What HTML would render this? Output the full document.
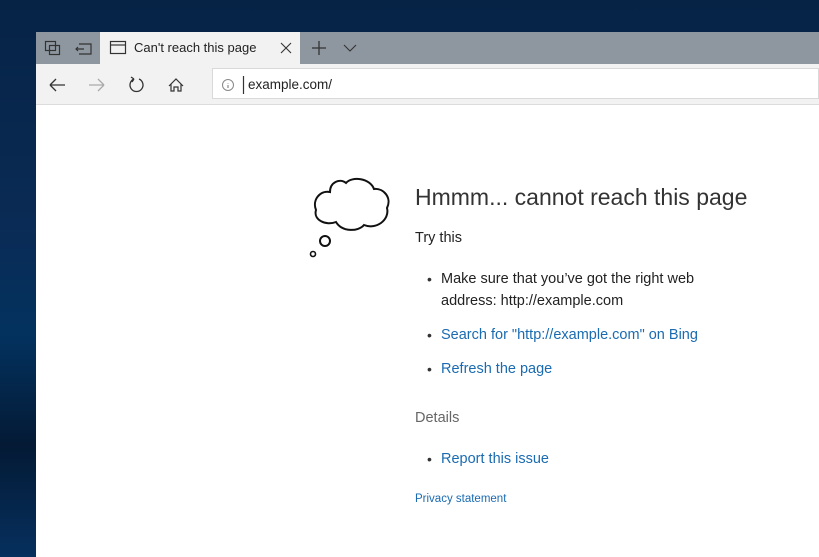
<!DOCTYPE html>
<html><head><meta charset="utf-8"><style>
body{margin:0;width:819px;height:557px;overflow:hidden;position:relative;font-family:"Liberation Sans",sans-serif;
background:linear-gradient(180deg,#062346 0%,#0a2b55 40%,#03325f 60%,#041a35 80%,#06305e 100%);}
.a{position:absolute;white-space:nowrap}
.tabbar{left:36px;top:32px;width:783px;height:32px;background:#8e979f}
.tab{left:100px;top:32px;width:200px;height:32px;background:#f2f2f2}
.tool{left:36px;top:64px;width:783px;height:40px;background:#f2f2f2;border-bottom:1px solid #dcdcdc}
.addr{left:212px;top:68px;width:607px;height:31px;background:#fff;border:1px solid #d9d9d9;box-sizing:border-box}
.content{left:36px;top:105px;width:783px;height:452px;background:#fff}
.t{font-size:14.5px;color:#222}
.l{font-size:14.5px;color:#1a6bb2}
.dot{font-size:14px;color:#333}
</style></head><body>
<div class="a tabbar"></div>
<div class="a tab"></div>
<div class="a tool"></div>
<div class="a addr"></div>
<div class="a content"></div>
<svg class="a" style="left:36px;top:32px" width="783" height="73" fill="none" stroke="#333" stroke-width="1.2">
<rect x="9.5" y="9.5" width="10" height="9"/><rect x="13.5" y="13.5" width="10" height="9"/>
<path d="M43 12h12v10H43M48 17h-8M42 15l-2 2 2 2"/>
<rect x="74.5" y="9.5" width="15" height="12"/><path d="M74.5 13h15"/>
<path d="M245 11l10 10M255 11l-10 10" stroke-width="1.1"/>
<path d="M283 9v14M276 16h14" stroke-width="1.3"/>
<path d="M308 13l6 6 6-6" stroke-width="1.1"/>
<path d="M14 53h15M14 53l6-6M14 53l6 6" stroke-width="1.3"/>
<path d="M53 53h15M68 53l-6-6M68 53l-6 6" stroke="#aaa" stroke-width="1.3"/>
<path d="M98 47a6.5 6.5 0 1 0 5 0M98 47l-3-2M98 47l-2 3" stroke-width="1.3"/>
<path d="M133 54l7-7 7 7M135 52v7h3v-4h4v4h3v-7" stroke-width="1.2"/>
<circle cx="192" cy="53" r="5.5" stroke="#888" stroke-width="1"/><path d="M192 51v0.5M192 53v3" stroke="#888"/>
<path d="M207.5 44v18" stroke="#333"/>
</svg>
<div class="a" style="left:134px;top:40px;font-size:13px;color:#222">Can't reach this page</div>
<div class="a" style="left:248px;top:77px;font-size:13.5px;color:#222">example.com/</div>
<svg class="a" style="left:300px;top:170px" width="100" height="100" fill="#fff" stroke="#111" stroke-width="2">
<path d="M30 22C20 20 12 30 16 40C13 50 26 56 36 52C42 62 58 62 64 55C76 60 90 50 87 38C92 28 84 18 74 19C70 8 52 6 46 13C40 8 30 12 30 22Z"/>
<circle cx="25" cy="71" r="5"/><circle cx="13" cy="84" r="2.5" stroke-width="1.6"/>
</svg>
<div class="a" style="left:415px;top:184px;font-size:23px;color:#333">Hmmm... cannot reach this page</div>
<div class="a t" style="left:415px;top:230px">Try this</div>
<div class="a dot" style="left:427px;top:271px">•</div>
<div class="a t" style="left:441px;top:271px">Make sure that you’ve got the right web</div>
<div class="a t" style="left:441px;top:293px">address: http://example.com</div>
<div class="a dot" style="left:427px;top:327px">•</div>
<div class="a l" style="left:441px;top:327px">Search for "http://example.com" on Bing</div>
<div class="a dot" style="left:427px;top:361px">•</div>
<div class="a l" style="left:441px;top:361px">Refresh the page</div>
<div class="a" style="left:415px;top:410px;font-size:14.5px;color:#666">Details</div>
<div class="a dot" style="left:427px;top:451px">•</div>
<div class="a l" style="left:441px;top:451px">Report this issue</div>
<div class="a" style="left:415px;top:493px;font-size:11.5px;color:#1a6bb2">Privacy statement</div>
</body></html>
